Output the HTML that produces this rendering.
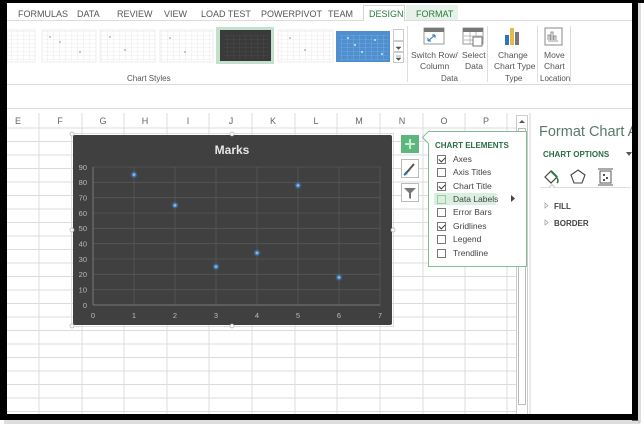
<!DOCTYPE html>
<html><head><meta charset="utf-8"><style>
*{margin:0;padding:0;box-sizing:border-box}
body{width:644px;height:428px;background:#fff;position:relative;overflow:hidden;font-family:"Liberation Sans",sans-serif;color:#444}
.a{position:absolute}
.t{font-size:9px;color:#555;white-space:nowrap}
.hdr{font-size:9px;color:#666;position:absolute;top:116px;width:20px;text-align:center}
.cb{position:absolute;left:437px;width:9px;height:9px;border:1px solid #777;background:#fff}
.lbl{position:absolute;left:453px;font-size:8.5px;color:#444;top:-1px}
.ck:after{content:"";position:absolute;left:2px;top:0px;width:3px;height:5px;border:solid #333;border-width:0 1.3px 1.3px 0;transform:rotate(45deg)}
</style></head><body>
<svg class="a" style="left:0;top:0" width="644" height="428">
<g stroke="#dcdcdc" stroke-width="1">
<line x1="7" y1="128" x2="516" y2="128"/>
<line x1="7" y1="141.5" x2="516" y2="141.5"/><line x1="7" y1="155" x2="516" y2="155"/><line x1="7" y1="168.5" x2="516" y2="168.5"/><line x1="7" y1="182" x2="516" y2="182"/><line x1="7" y1="195.5" x2="516" y2="195.5"/><line x1="7" y1="209" x2="516" y2="209"/><line x1="7" y1="222.5" x2="516" y2="222.5"/><line x1="7" y1="236" x2="516" y2="236"/><line x1="7" y1="249.5" x2="516" y2="249.5"/><line x1="7" y1="263" x2="516" y2="263"/><line x1="7" y1="276.5" x2="516" y2="276.5"/><line x1="7" y1="290" x2="516" y2="290"/><line x1="7" y1="303.5" x2="516" y2="303.5"/><line x1="7" y1="317" x2="516" y2="317"/><line x1="7" y1="330.5" x2="516" y2="330.5"/><line x1="7" y1="344" x2="516" y2="344"/><line x1="7" y1="357.5" x2="516" y2="357.5"/><line x1="7" y1="371" x2="516" y2="371"/><line x1="7" y1="384.5" x2="516" y2="384.5"/><line x1="7" y1="398" x2="516" y2="398"/><line x1="7" y1="411.5" x2="516" y2="411.5"/>
<line x1="39" y1="113" x2="39" y2="415"/><line x1="82" y1="113" x2="82" y2="415"/><line x1="124" y1="113" x2="124" y2="415"/><line x1="167" y1="113" x2="167" y2="415"/><line x1="209" y1="113" x2="209" y2="415"/><line x1="252" y1="113" x2="252" y2="415"/><line x1="295" y1="113" x2="295" y2="415"/><line x1="337" y1="113" x2="337" y2="415"/><line x1="380" y1="113" x2="380" y2="415"/><line x1="423" y1="113" x2="423" y2="415"/><line x1="465" y1="113" x2="465" y2="415"/><line x1="507" y1="113" x2="507" y2="415"/>
<line x1="7" y1="84.5" x2="632" y2="84.5"/><line x1="7" y1="108.5" x2="632" y2="108.5"/>
<line x1="7" y1="20.5" x2="632" y2="20.5"/>
</g>
<rect x="516.5" y="115.5" width="11" height="299" fill="#fff" stroke="#ccc"/>
<rect x="518.5" y="128.5" width="7" height="276" fill="#fff" stroke="#bbb"/>
<path d="M519 123 l3 -3 l3 3z" fill="#555"/>
<line x1="530" y1="113" x2="530" y2="415" stroke="#d4d4d4"/>
</svg>
<div class="hdr" style="left:8px">E</div><div class="hdr" style="left:50px">F</div><div class="hdr" style="left:93px">G</div><div class="hdr" style="left:135px">H</div><div class="hdr" style="left:178px">I</div><div class="hdr" style="left:221px">J</div><div class="hdr" style="left:263px">K</div><div class="hdr" style="left:306px">L</div><div class="hdr" style="left:349px">M</div><div class="hdr" style="left:392px">N</div><div class="hdr" style="left:434px">O</div><div class="hdr" style="left:476px">P</div>

<div class="a t" style="top:9px;left:18px;font-size:9px">FORMULAS</div>
<div class="a t" style="top:9px;left:77px;font-size:9px">DATA</div>
<div class="a t" style="top:9px;left:117px;font-size:9px">REVIEW</div>
<div class="a t" style="top:9px;left:164px;font-size:9px">VIEW</div>
<div class="a t" style="top:9px;left:201px;font-size:9px">LOAD TEST</div>
<div class="a t" style="top:9px;left:261px;font-size:9px">POWERPIVOT</div>
<div class="a t" style="top:9px;left:328px;font-size:9px">TEAM</div>
<div class="a" style="left:363px;top:5px;width:42px;height:16px;border:1px solid #d4d4d4;border-bottom:none;background:#fff"></div>
<div class="a t" style="top:9px;left:369px;font-size:9px;color:#2a7a3e">DESIGN</div>
<div class="a" style="left:406px;top:5px;width:52px;height:15px;background:#e6f2e9"></div>
<div class="a t" style="top:9px;left:416px;font-size:9px;color:#2a7a3e">FORMAT</div>

<svg class="a" style="left:0;top:0" width="644" height="90">
<defs><pattern id="g" width="6" height="4" patternUnits="userSpaceOnUse"><path d="M6 0V4M0 4H6" stroke="#ddd" stroke-width="0.6" fill="none"/></pattern>
<pattern id="gd" width="6" height="4" patternUnits="userSpaceOnUse"><path d="M6 0V4M0 4H6" stroke="#555" stroke-width="0.6" fill="none"/></pattern>
<pattern id="gb" width="6" height="4" patternUnits="userSpaceOnUse"><path d="M6 0V4M0 4H6" stroke="#8cbbe8" stroke-width="0.6" fill="none"/></pattern></defs>
<rect x="7" y="30" width="28" height="32" fill="url(#g)" stroke="#eee"/>
<rect x="42" y="30" width="54" height="32" fill="url(#g)" stroke="#eee"/>
<rect x="100" y="30" width="55" height="32" fill="url(#g)" stroke="#eee"/>
<rect x="160" y="30" width="53" height="32" fill="url(#g)" stroke="#eee"/>
<rect x="216" y="27" width="58" height="37" fill="#c3e0cd"/>
<rect x="220" y="30" width="51" height="31" fill="#3a3a3a"/><rect x="224" y="35" width="45" height="24" fill="url(#gd)"/>
<rect x="278" y="30" width="55" height="32" fill="url(#g)" stroke="#eee"/>
<rect x="336" y="31" width="54" height="31" fill="#4f8fd0"/><rect x="340" y="35" width="48" height="25" fill="url(#gb)"/>
<g fill="#888"><circle cx="50" cy="37" r="0.8"/><circle cx="60" cy="42" r="0.8"/><circle cx="80" cy="52" r="0.8"/><circle cx="110" cy="37" r="0.8"/><circle cx="125" cy="50" r="0.8"/><circle cx="170" cy="38" r="0.8"/><circle cx="185" cy="52" r="0.8"/><circle cx="290" cy="38" r="0.8"/><circle cx="305" cy="50" r="0.8"/></g>
<g fill="#fff"><circle cx="348" cy="38" r="0.9"/><circle cx="355" cy="45" r="0.9"/><circle cx="362" cy="52" r="0.9"/><circle cx="375" cy="40" r="0.9"/><circle cx="382" cy="54" r="0.9"/></g>
<g fill="#fff" stroke="#ccc"><rect x="393.5" y="29.5" width="10" height="11"/><rect x="393.5" y="41.5" width="10" height="10"/><rect x="393.5" y="52.5" width="10" height="10"/></g>
<path d="M396 47l2.5 2.5l2.5-2.5z M396 58l2.5 2.5l2.5-2.5z M396 56h5" fill="#555" stroke="#555" stroke-width="0.5"/>
<line x1="407.5" y1="26" x2="407.5" y2="82" stroke="#ddd"/>
<line x1="487.5" y1="26" x2="487.5" y2="82" stroke="#ddd"/>
<line x1="537.5" y1="26" x2="537.5" y2="82" stroke="#ddd"/>
<line x1="570.5" y1="26" x2="570.5" y2="82" stroke="#ddd"/>
<rect x="424" y="28" width="20" height="16" fill="#fff" stroke="#999"/><rect x="424" y="28" width="20" height="4" fill="#777"/><path d="M428 41l7-6M435 35h-3M435 35v3M428 41h3M428 41v-3" stroke="#2e75b6" fill="none"/>
<rect x="463" y="28" width="20" height="16" fill="#fff" stroke="#999"/><rect x="463" y="28" width="20" height="4" fill="#777"/><path d="M463 36h20M463 40h20M470 32v12M476 32v12" stroke="#bbb"/><rect x="473" y="37" width="9" height="9" fill="#fff" stroke="#777"/>
<rect x="505" y="35" width="4" height="10" fill="#2e75b6"/><rect x="510" y="28" width="4" height="17" fill="#e8b84a"/><rect x="515" y="32" width="4" height="13" fill="#777"/>
<rect x="545" y="28" width="17" height="17" fill="#fff" stroke="#888"/><path d="M548 40v-5h2v5M551 40v-8h2v8M554 40v-4h2v4M548 41h10" stroke="#777" fill="none" stroke-width="0.8"/>
</svg>
<div class="a t" style="top:50px;left:411px;font-size:8.5px">Switch Row/</div>
<div class="a t" style="top:61px;left:420px;font-size:8.5px">Column</div>
<div class="a t" style="top:50px;left:462px;font-size:8.5px">Select</div>
<div class="a t" style="top:61px;left:465px;font-size:8.5px">Data</div>
<div class="a t" style="top:50px;left:498px;font-size:8.5px">Change</div>
<div class="a t" style="top:61px;left:494px;font-size:8.5px">Chart Type</div>
<div class="a t" style="top:50px;left:544px;font-size:8.5px">Move</div>
<div class="a t" style="top:61px;left:544px;font-size:8.5px">Chart</div>
<div class="a t" style="top:74px;left:127px;font-size:8px">Chart Styles</div>
<div class="a t" style="top:74px;left:441px;font-size:8px">Data</div>
<div class="a t" style="top:74px;left:505px;font-size:8px">Type</div>
<div class="a t" style="top:74px;left:540px;font-size:8px">Location</div>

<svg class="a" style="left:0;top:0" width="644" height="428">
<defs><radialGradient id="gl"><stop offset="0" stop-color="#cfe6ff"/><stop offset="0.35" stop-color="#4d8fd0"/><stop offset="1" stop-color="#2c5c8c" stop-opacity="0"/></radialGradient></defs>
<rect x="71.5" y="133.5" width="322" height="193" fill="none" stroke="#ddd"/>
<rect x="73" y="135" width="319" height="190" rx="2" fill="#404040"/>
<g stroke="#575757" stroke-width="0.8">
<line x1="93" y1="167" x2="380" y2="167"/><line x1="93" y1="182.3" x2="380" y2="182.3"/><line x1="93" y1="197.7" x2="380" y2="197.7"/><line x1="93" y1="213" x2="380" y2="213"/><line x1="93" y1="228.3" x2="380" y2="228.3"/><line x1="93" y1="243.7" x2="380" y2="243.7"/><line x1="93" y1="259" x2="380" y2="259"/><line x1="93" y1="274.3" x2="380" y2="274.3"/><line x1="93" y1="289.7" x2="380" y2="289.7"/>
<line x1="134" y1="167" x2="134" y2="305"/><line x1="175" y1="167" x2="175" y2="305"/><line x1="216" y1="167" x2="216" y2="305"/><line x1="257" y1="167" x2="257" y2="305"/><line x1="298" y1="167" x2="298" y2="305"/><line x1="339" y1="167" x2="339" y2="305"/><line x1="380" y1="167" x2="380" y2="305"/>
</g>
<line x1="93" y1="167" x2="93" y2="305" stroke="#777"/><line x1="93" y1="305" x2="380" y2="305" stroke="#777"/>
<g fill="url(#gl)"><circle cx="134" cy="174.7" r="4"/><circle cx="175" cy="205.3" r="4"/><circle cx="216" cy="266.7" r="4"/><circle cx="257" cy="252.9" r="4"/><circle cx="298" cy="185.4" r="4"/><circle cx="339" cy="277.4" r="4"/></g>
<g fill="#bbb" font-family="Liberation Sans" font-size="7.5" text-anchor="end">
<text x="87" y="170">90</text><text x="87" y="185">80</text><text x="87" y="200.5">70</text><text x="87" y="216">60</text><text x="87" y="231">50</text><text x="87" y="246.5">40</text><text x="87" y="262">30</text><text x="87" y="277">20</text><text x="87" y="292.5">10</text><text x="87" y="308">0</text></g>
<g fill="#bbb" font-family="Liberation Sans" font-size="7.5" text-anchor="middle">
<text x="93" y="318">0</text><text x="134" y="318">1</text><text x="175" y="318">2</text><text x="216" y="318">3</text><text x="257" y="318">4</text><text x="298" y="318">5</text><text x="339" y="318">6</text><text x="380" y="318">7</text></g>
<text x="232" y="154" fill="#e6e6e6" font-family="Liberation Sans" font-size="12" font-weight="bold" text-anchor="middle">Marks</text>
<g fill="#fff" stroke="#aaa" stroke-width="0.7"><circle cx="72" cy="134" r="2"/><circle cx="232" cy="134" r="2"/><circle cx="393" cy="230" r="2"/><circle cx="72" cy="326" r="2"/><circle cx="232" cy="326" r="2"/><circle cx="72" cy="230" r="2"/></g>
<rect x="401" y="135" width="18" height="18" fill="#5fb67c"/><path d="M410 139v10M405 144h10" stroke="#c8ecd3" stroke-width="2"/>
<rect x="401.5" y="159.5" width="17" height="18" fill="#fff" stroke="#bbb"/><path d="M405 174l4-4M408 171l6-7" stroke="#555" stroke-width="2"/><path d="M404 175l3-2" stroke="#2e75b6" stroke-width="2"/>
<rect x="401.5" y="183.5" width="17" height="18" fill="#fff" stroke="#bbb"/><path d="M404 188h12l-5 5v6l-2-1v-5z" fill="#777"/>
<path d="M428.5 131.5h98v135h-98v-123l-6-6 6-6z" fill="#fff" stroke="#7fbf95"/>
<rect x="434" y="193" width="62" height="12" fill="#d9efe0"/>
<path d="M511 195l4 3.5l-4 3.5z" fill="#444"/>
<path d="M545 177l6-6 6 6-6 6z" fill="#fff" stroke="#444" stroke-width="1.2"/><path d="M551 171l6 6" stroke="#2a7a3e" stroke-width="2"/><path d="M557 178q2 3 0 5" stroke="#2a7a3e" stroke-width="1.5" fill="none"/>
<path d="M578 170l7 5-3 8h-8l-3-8z" fill="#fff" stroke="#444" stroke-width="1.1"/>
<rect x="600" y="171" width="11" height="12" fill="#fff" stroke="#555"/><path d="M598 169h15M598 185h15" stroke="#555"/><g fill="#555"><rect x="603" y="174" width="2" height="2"/><rect x="606" y="177" width="2" height="2"/><rect x="603" y="179" width="2" height="2"/></g>
<path d="M540 187.5h90" stroke="#ddd"/><path d="M549 187.5l3-3 3 3" stroke="#ccc" fill="#fff"/>
<path d="M545 203l3 2.5-3 2.5z M545 220l3 2.5-3 2.5z" fill="none" stroke="#999" stroke-width="0.7"/>
<path d="M626 152l3 4 3-4z" fill="#555"/>
</svg>
<div class="a" style="left:435px;top:141px;font-size:8px;font-weight:bold;color:#2a6e40">CHART ELEMENTS</div>
<div class="cb ck" style="top:155px"></div><div class="lbl" style="top:154px">Axes</div>
<div class="cb" style="top:168px"></div><div class="lbl" style="top:167px">Axis Titles</div>
<div class="cb ck" style="top:182px"></div><div class="lbl" style="top:181px">Chart Title</div>
<div class="cb" style="top:195px;background:#d9efe0;border-color:#9c9"></div><div class="lbl" style="top:194px">Data Labels</div>
<div class="cb" style="top:208px"></div><div class="lbl" style="top:207px">Error Bars</div>
<div class="cb ck" style="top:222px"></div><div class="lbl" style="top:221px">Gridlines</div>
<div class="cb" style="top:235px"></div><div class="lbl" style="top:234px">Legend</div>
<div class="cb" style="top:249px"></div><div class="lbl" style="top:248px">Trendline</div>

<div class="a" style="left:539px;top:124px;font-size:14.5px;color:#5a7a6a;white-space:nowrap">Format Chart A</div>
<div class="a" style="left:543px;top:150px;font-size:8px;font-weight:bold;color:#2a6e40;white-space:nowrap">CHART OPTIONS</div>
<div class="a" style="left:554px;top:202px;font-size:8px;font-weight:bold;color:#444">FILL</div>
<div class="a" style="left:554px;top:219px;font-size:8px;font-weight:bold;color:#444">BORDER</div>

<div class="a" style="left:0;top:0;width:644px;height:3px;background:#000"></div>
<div class="a" style="left:0;top:0;width:7px;height:420px;background:#000"></div>
<div class="a" style="left:632px;top:0;width:6px;height:421px;background:#000"></div>
<div class="a" style="left:0;top:414px;width:638px;height:6px;background:#000"></div>
<div class="a" style="left:4px;top:420px;width:636px;height:4px;background:#bbb;opacity:.5"></div>
<div class="a" style="left:638px;top:3px;width:3px;height:420px;background:#bbb;opacity:.5"></div>
</body></html>
